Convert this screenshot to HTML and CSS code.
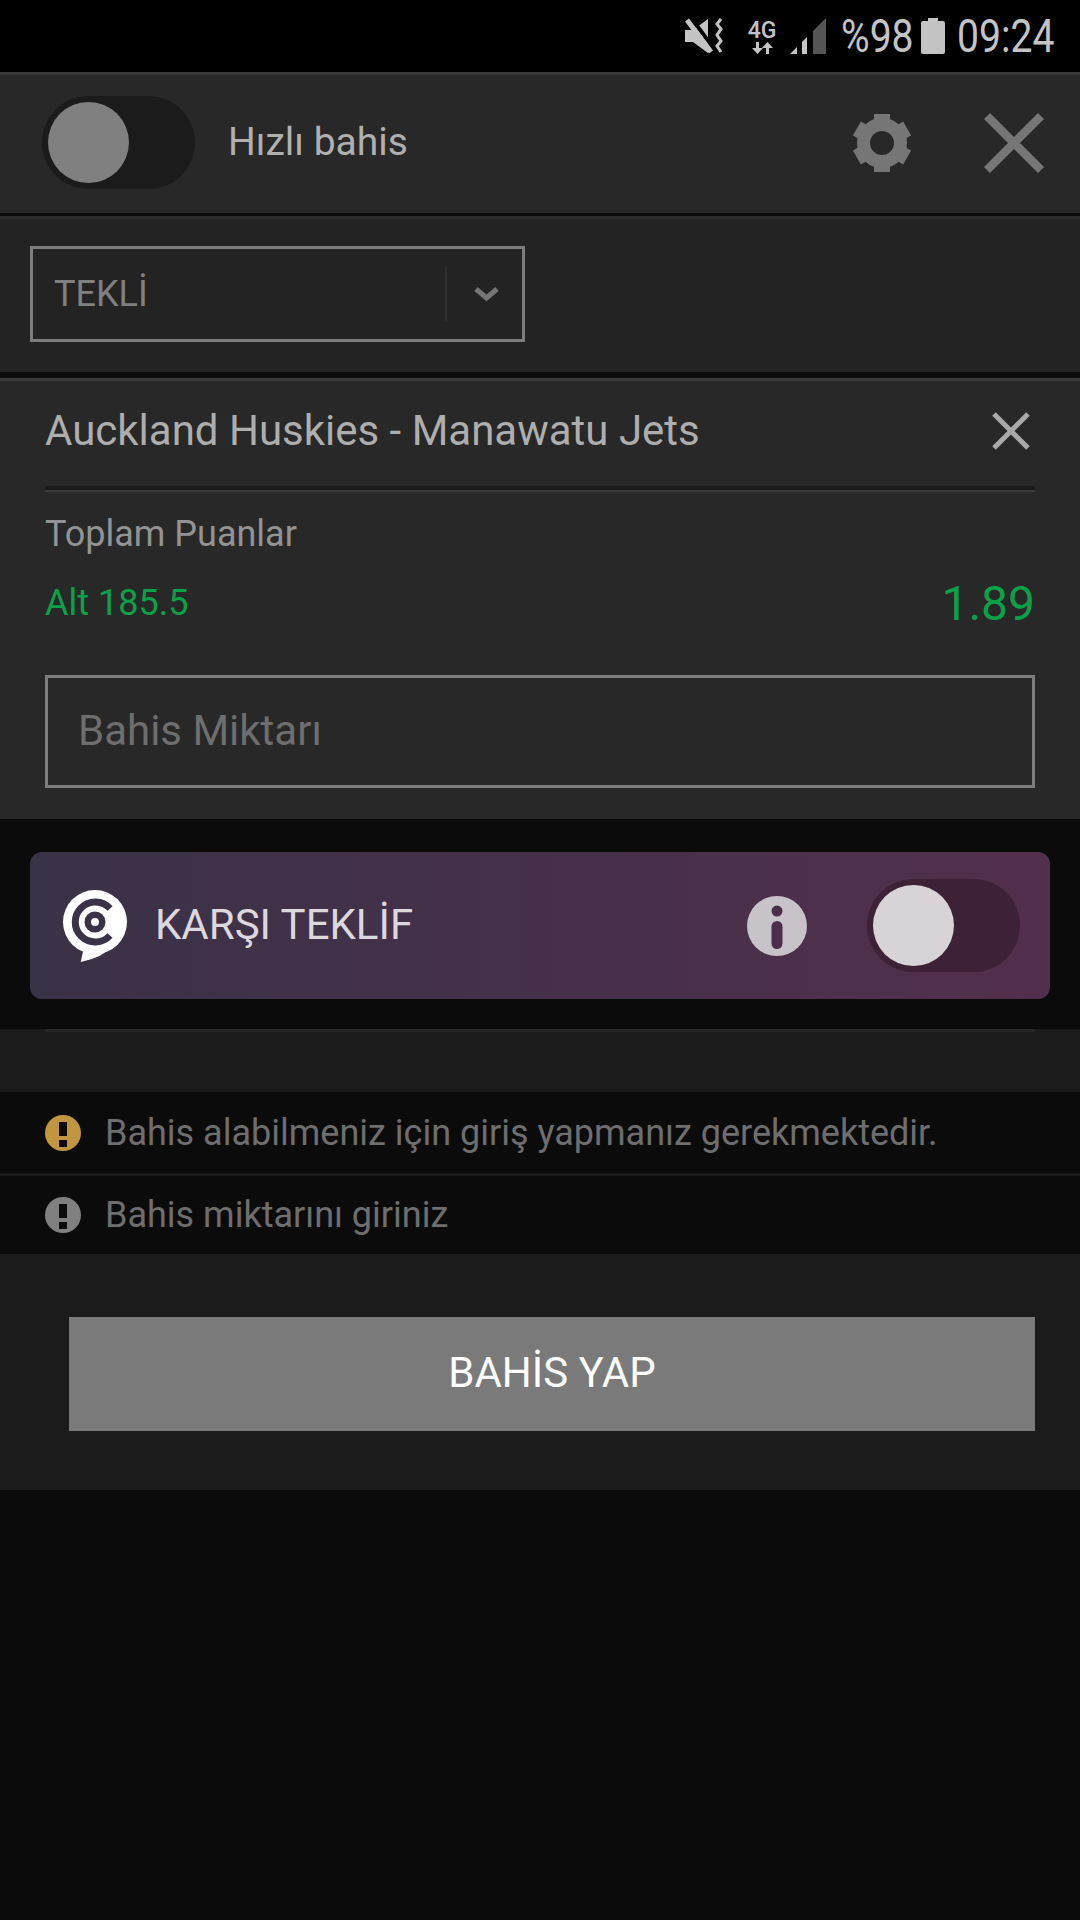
FILE: index.html
```html
<!DOCTYPE html>
<html lang="tr">
<head>
    <meta charset="UTF-8">
    <meta name="viewport" content="width=device-width, initial-scale=1.0">
    <title>Bahis</title>
    <link rel="stylesheet" href="styles.css">
</head>
<body>
    <div class="status-bar">
        <svg class="icon-mute" width="38" height="36" viewBox="0 0 38 36">
            <path d="M0 12h8L23 1v34L8 24H0z" fill="#c4c4c4"/>
            <path d="M5 -2l24 33" stroke="#000" stroke-width="4"/>
            <path d="M2 2l24 32" stroke="#c4c4c4" stroke-width="5"/>
            <path d="M36 1l-4 5 4 5-4 6 4 6-4 5 4 6" fill="none" stroke="#c4c4c4" stroke-width="3"/>
        </svg>
        <div class="net-type">
            <span class="net-label">4G</span>
            <svg width="24" height="12" viewBox="0 0 24 12">
                <path d="M6 0h3v6h4l-5.500 6L2 6h4zM16 12h3V6h4l-5.500-6L12 6h4z" fill="#c4c4c4"/>
            </svg>
        </div>
        <svg class="icon-signal" width="36" height="36" viewBox="0 0 36 36">
            <path d="M0 36l7-7v7z" fill="#c4c4c4"/>
            <path d="M12 36V24l5-5v17z" fill="#c4c4c4"/>
            <path d="M23 36V13l13-13v36z" fill="#555"/>
        </svg>
        <div class="status-num percent"><span>%98</span></div>
        <svg class="icon-battery" width="24" height="36" viewBox="0 0 24 36">
            <path d="M7 0h10v3h5q2 0 2 2v29q0 2-2 2H2q-2 0-2-2V5q0-2 2-2h5z" fill="#c4c4c4"/>
        </svg>
        <div class="status-num clock"><span>09:24</span></div>
    </div>

    <header class="top-bar">
        <div class="switch">
            <div class="switch-knob"></div>
        </div>
        <span class="quick-label">Hızlı bahis</span>
        <svg class="icon-gear" width="58" height="58" viewBox="-29 -29 58 58">
            <circle r="18.500" fill="none" stroke="#767676" stroke-width="13"/>
            <g fill="#767676">
                <rect x="-8" y="-29" width="16" height="10"/>
                <rect x="-8" y="-29" width="16" height="10" transform="rotate(60)"/>
                <rect x="-8" y="-29" width="16" height="10" transform="rotate(120)"/>
                <rect x="-8" y="-29" width="16" height="10" transform="rotate(180)"/>
                <rect x="-8" y="-29" width="16" height="10" transform="rotate(240)"/>
                <rect x="-8" y="-29" width="16" height="10" transform="rotate(300)"/>
            </g>
        </svg>
        <svg class="icon-close" width="60" height="60" viewBox="0 0 60 60">
            <path d="M3 3l54 54M57 3L3 57" stroke="#767676" stroke-width="8.500"/>
        </svg>
    </header>

    <section class="type-bar">
        <div class="select">
            <span class="select-text">TEKLİ</span>
            <div class="select-arrow">
                <svg width="25" height="16" viewBox="0 0 25 16">
                    <path d="M2 3l10.500 9L23 3" fill="none" stroke="#767676" stroke-width="5"/>
                </svg>
            </div>
        </div>
    </section>

    <section class="bet-card">
        <div class="bet-title">
            <span>Auckland Huskies - Manawatu Jets</span>
            <svg width="38" height="38" viewBox="0 0 38 38">
                <path d="M2 2l34 34M36 2L2 36" stroke="#a9a9a9" stroke-width="5"/>
            </svg>
        </div>
        <div class="bet-sep"></div>
        <div class="market">Toplam Puanlar</div>
        <div class="pick">
            <span class="pick-name">Alt 185.5</span>
            <span class="pick-odds">1.89</span>
        </div>
        <div class="stake">Bahis Miktarı</div>
    </section>

    <section class="counter-wrap">
        <div class="counter">
            <svg class="counter-logo" width="66" height="72" viewBox="0 0 66 72">
                <circle cx="33" cy="32" r="32" fill="#fff"/>
                <path d="M22 57L18.700 72Q40 68 54 54z" fill="#fff"/>
                <path d="M48 18.500A20 20 0 1 0 48 45.500" fill="none" stroke="#3a3247" stroke-width="7"/>
                <circle cx="33" cy="32" r="10.500" fill="#3a3247"/>
                <circle cx="33" cy="32" r="4" fill="#fff"/>
            </svg>
            <span class="counter-text">KARŞI TEKLİF</span>
            <svg class="icon-info" width="60" height="60" viewBox="0 0 60 60">
                <circle cx="30" cy="30" r="30" fill="#c8c2c9"/>
                <circle cx="30" cy="15" r="5.500" fill="#4a2e4b"/>
                <rect x="24.500" y="25" width="11" height="28" rx="5.500" fill="#4a2e4b"/>
            </svg>
            <div class="switch switch-on">
                <div class="switch-knob"></div>
            </div>
        </div>
    </section>

    <section class="messages">
        <div class="msg-line"></div>
        <div class="msg msg-first">
            <svg width="36" height="36" viewBox="0 0 36 36">
                <circle cx="18" cy="18" r="18" fill="#c2953f"/>
                <path d="M14 7h8v14h-8zM14 25h8v7h-8z" fill="#0c0b0c"/>
            </svg>
            <span>Bahis alabilmeniz için giriş yapmanız gerekmektedir.</span>
        </div>
        <div class="msg">
            <svg width="36" height="36" viewBox="0 0 36 36">
                <circle cx="18" cy="18" r="18" fill="#808080"/>
                <path d="M14 7h8v14h-8zM14 25h8v7h-8z" fill="#0c0b0c"/>
            </svg>
            <span>Bahis miktarını giriniz</span>
        </div>
    </section>

    <section class="submit-wrap">
        <div class="submit">BAHİS YAP</div>
    </section>
</body>
</html>
```
FILE: styles.css
```css
html, body {
    margin: 0;
    height: 100%;
}

body {
    background-color: #0c0b0c;
    font-family: Roboto, sans-serif;
    color: #a8a8a8;
}

.status-bar {
    height: 72px;
    background-color: #000;
    display: flex;
    align-items: center;
    justify-content: flex-end;
    padding-right: 25px;
    color: #c4c4c4;
}

.icon-mute {
    margin-right: 24px;
}

.net-type {
    width: 30px;
    display: flex;
    flex-direction: column;
    align-items: center;
    margin-right: 13px;
}

.net-label {
    font-size: 23px;
    font-weight: 500;
    line-height: 23px;
}

.icon-signal {
    margin-right: 15px;
}

.status-num {
    font-size: 46px;
    line-height: 72px;
    white-space: nowrap;
}

.status-num span {
    display: inline-block;
    transform: scaleX(0.85);
    transform-origin: left center;
}

.percent {
    width: 70px;
    margin-right: 10px;
}

.clock {
    width: 98px;
    margin-left: 12px;
}

.top-bar {
    height: 135px;
    background-color: #282828;
    border-top: 3px solid #3a3a3a;
    border-bottom: 3px solid #0c0b0c;
    display: flex;
    align-items: center;
    padding: 0 36px 3px 42px;
}

.switch {
    width: 153px;
    height: 93px;
    flex-shrink: 0;
    border-radius: 47px;
    background-color: #1b1b1b;
    padding: 6px;
    box-sizing: border-box;
}

.switch-knob {
    width: 81px;
    height: 81px;
    border-radius: 50%;
    background-color: #808080;
}

.quick-label {
    margin-left: 33px;
    padding-bottom: 2px;
    font-size: 39px;
    color: #b0b0b0;
    flex: 1;
}

.icon-close {
    margin-left: 73px;
}

.type-bar {
    height: 150px;
    background-color: #232323;
    border-top: 3px solid #2e2e2e;
    border-bottom: 6px solid #0c0b0c;
    padding: 0 0 3px 30px;
    display: flex;
    align-items: center;
}

.select {
    width: 495px;
    height: 96px;
    box-sizing: border-box;
    border: 3px solid #7d7d7d;
    display: flex;
    align-items: center;
    justify-content: space-between;
    padding-left: 21px;
}

.select-text {
    font-size: 36px;
    color: #808080;
}

.select-arrow {
    width: 77px;
    height: 54px;
    box-sizing: border-box;
    border-left: 2px solid #2e2e2e;
    padding-left: 3px;
    display: flex;
    align-items: center;
    justify-content: center;
}

.bet-card {
    background-color: #282828;
    border-top: 3px solid #3a3a3a;
    height: 438px;
    padding: 0 45px;
}

.bet-title {
    height: 99px;
    padding: 0 5px 6px 0;
    display: flex;
    align-items: center;
    justify-content: space-between;
    font-size: 42px;
    color: #aeaeae;
}

.bet-sep {
    height: 2px;
    border-top: 4px solid #1b1b1b;
    background-color: #3a3a3a;
}

.market {
    margin-top: 21px;
    font-size: 36px;
    line-height: 42px;
    color: #939393;
}

.pick {
    display: flex;
    align-items: center;
    justify-content: space-between;
    height: 56px;
    margin-top: 20px;
    color: #0ba148;
}

.pick-name {
    font-size: 36px;
}

.pick-odds {
    font-size: 48px;
}

.stake {
    margin-top: 44px;
    height: 113px;
    box-sizing: border-box;
    border: 3px solid #7d7d7d;
    display: flex;
    align-items: center;
    padding: 0 0 2px 30px;
    font-size: 42px;
    color: #6e6e6e;
}

.counter-wrap {
    padding: 33px 30px 30px;
}

.counter {
    height: 147px;
    border-radius: 12px;
    background: linear-gradient(90deg, #3a3247, #522f4c);
    display: flex;
    align-items: center;
    padding: 0 30px 0 32px;
}

.counter-text {
    margin-left: 27px;
    padding-bottom: 2px;
    font-size: 42px;
    color: #dcd8de;
    flex: 1;
}

.switch-on {
    margin-left: 60px;
    background-color: #3d2237;
}

.switch-on .switch-knob {
    background-color: #d7d3d7;
}

.messages {
    background-color: #1b1b1b;
}

.msg-line {
    height: 3px;
    margin: 0 45px 60px;
    background-color: #262626;
}

.msg {
    height: 78px;
    background-color: #0c0b0c;
    display: flex;
    align-items: center;
    padding-left: 45px;
    font-size: 36px;
    color: #6e6e6e;
}

.msg-first {
    height: 81px;
    margin-bottom: 3px;
}

.msg svg {
    margin-right: 24px;
}

.submit-wrap {
    background-color: #1b1b1b;
    height: 236px;
    padding: 63px 45px 0 69px;
    box-sizing: border-box;
}

.submit {
    height: 111px;
    padding-bottom: 3px;
    background-color: #7a7a7a;
    display: flex;
    align-items: center;
    justify-content: center;
    font-size: 42px;
    color: #fff;
}
```
